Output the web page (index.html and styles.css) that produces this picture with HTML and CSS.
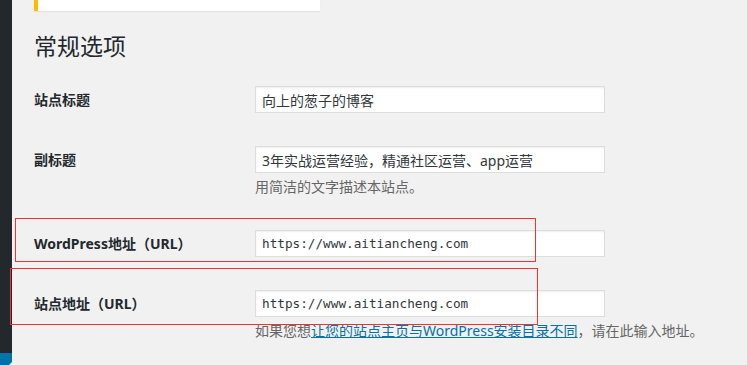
FILE: index.html
```html
<!DOCTYPE html>
<html lang="zh-CN">
<head>
  <meta charset="UTF-8">
  <meta name="viewport" content="width=device-width, initial-scale=1.0">
  <title>常规选项</title>
  <link rel="stylesheet" href="styles.css">
</head>
<body>

  <div class="admin-menu">
    <div class="menu-current"><span class="menu-arrow"></span></div>
  </div>

  <div class="wrap">
    <div class="notice"></div>

    <h1>常规选项</h1>

    <div class="form-table">
      <div class="form-row">
        <label for="blogname">站点标题</label>
        <div class="field">
          <input type="text" id="blogname" value="向上的葱子的博客" />
        </div>
      </div>

      <div class="form-row">
        <label for="blogdescription">副标题</label>
        <div class="field">
          <input type="text" id="blogdescription" value="3年实战运营经验，精通社区运营、app运营" />
          <p class="description">用简洁的文字描述本站点。</p>
        </div>
      </div>

      <div class="form-row">
        <label for="siteurl">WordPress地址（URL）</label>
        <div class="field">
          <input type="text" id="siteurl" class="code" value="https://www.aitiancheng.com" />
        </div>
      </div>

      <div class="form-row">
        <label for="home">站点地址（URL）</label>
        <div class="field">
          <input type="text" id="home" class="code" value="https://www.aitiancheng.com" />
          <p class="description">如果您想<a href="#">让您的站点主页与WordPress安装目录不同</a>，请在此输入地址。</p>
        </div>
      </div>
    </div>
  </div>

  <!-- annotation boxes drawn over the screenshot -->
  <div class="mark mark-siteurl"></div>
  <div class="mark mark-home"></div>

</body>
</html>
```

FILE: styles.css
```css
body {
  margin: 0;
  height: 365px;
  overflow: hidden;
  background-color: #f1f1f1;
  color: #23282d;
  font-family: "Noto Sans", "Noto Sans CJK SC", sans-serif;
  font-size: 13px;
  display: flex;
  position: relative;
}
.admin-menu {
  width: 12px;
  flex-shrink: 0;
  background-color: #23282d;
  display: flex;
  flex-direction: column;
  justify-content: flex-end;
}
.menu-current {
  height: 12px;
  background-color: #0073aa;
  position: relative;
}
.menu-arrow {
  position: absolute;
  right: 0;
  bottom: 0;
  border-right: 3px solid #f1f1f1;
  border-top: 3px solid transparent;
}
.wrap {
  flex: 1;
  padding-left: 22px;
}
.notice {
  width: 282px;
  height: 11px;
  background-color: #fff;
  border-left: 4px solid #ffb900;
  box-shadow: 0 1px 1px rgba(0, 0, 0, 0.06);
}
h1 {
  margin: 20px 0 0;
  font-size: 23px;
  font-weight: 400;
  line-height: 29px;
  font-family: "Noto Sans CJK SC", sans-serif;
}
.form-table {
  margin-top: 26px;
  display: flex;
  flex-direction: column;
  gap: 33px;
}
.form-row {
  display: flex;
}
.form-row label {
  width: 221px;
  flex-shrink: 0;
  font-size: 14px;
  font-weight: 700;
  line-height: 27px;
  color: #23282d;
}
.field input {
  display: block;
  box-sizing: border-box;
  width: 350px;
  height: 27px;
  margin: 0;
  padding: 0 6px;
  border: 1px solid #ddd;
  box-shadow: inset 0 1px 2px rgba(0, 0, 0, 0.07);
  background-color: #fff;
  color: #32373c;
  font-family: "Noto Sans", "Noto Sans CJK SC", sans-serif;
  font-size: 14px;
  outline: none;
}
.field input.code {
  font-family: "DejaVu Sans Mono", monospace;
  font-size: 12.7px;
}
.description {
  margin: 4px 0 0;
  font-size: 14px;
  line-height: 20px;
  color: #666;
  white-space: nowrap;
}
.description a {
  color: #0073aa;
  text-decoration: underline;
}
.mark {
  position: absolute;
  border: 1px solid #ee3333;
}
.mark-siteurl {
  left: 15px;
  top: 218px;
  width: 519px;
  height: 42px;
}
.mark-home {
  left: 10px;
  top: 268px;
  width: 526px;
  height: 55px;
}
```
